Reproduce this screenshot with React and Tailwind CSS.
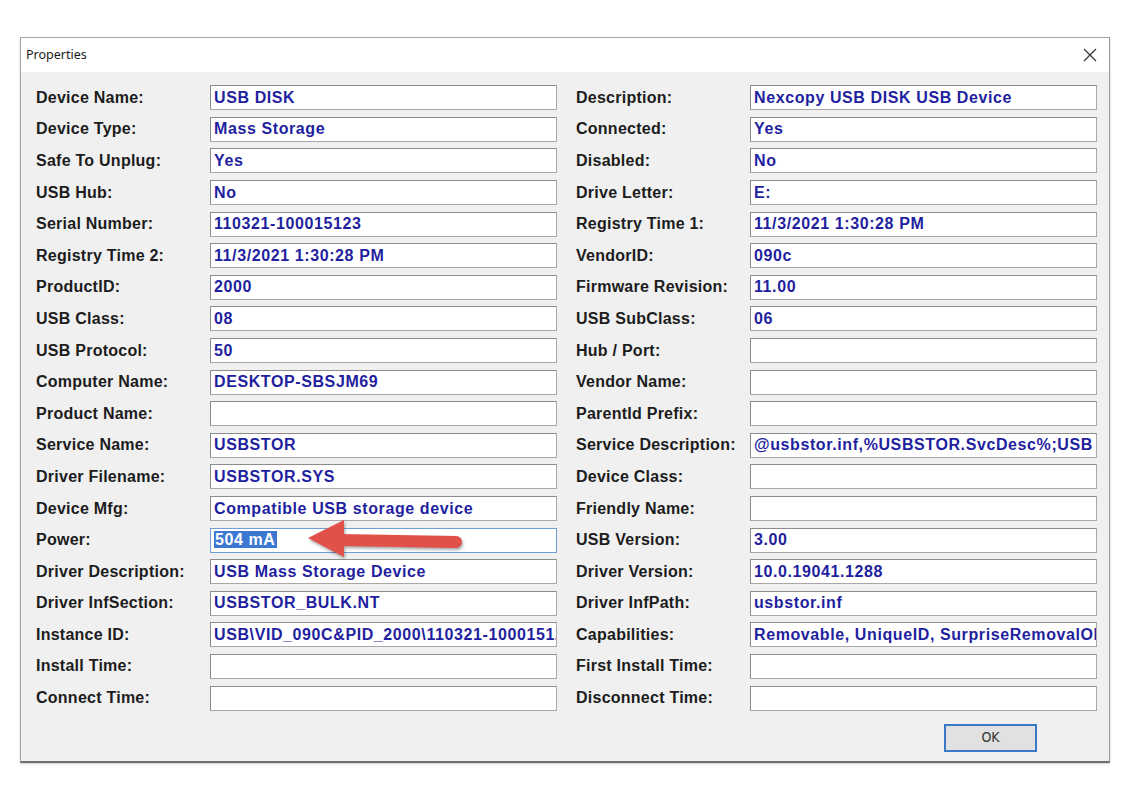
import React from "react";

const left = [
  ["Device Name:", "USB DISK"],
  ["Device Type:", "Mass Storage"],
  ["Safe To Unplug:", "Yes"],
  ["USB Hub:", "No"],
  ["Serial Number:", "110321-100015123"],
  ["Registry Time 2:", "11/3/2021 1:30:28 PM"],
  ["ProductID:", "2000"],
  ["USB Class:", "08"],
  ["USB Protocol:", "50"],
  ["Computer Name:", "DESKTOP-SBSJM69"],
  ["Product Name:", ""],
  ["Service Name:", "USBSTOR"],
  ["Driver Filename:", "USBSTOR.SYS"],
  ["Device Mfg:", "Compatible USB storage device"],
  ["Power:", "504 mA"],
  ["Driver Description:", "USB Mass Storage Device"],
  ["Driver InfSection:", "USBSTOR_BULK.NT"],
  ["Instance ID:", "USB\\VID_090C&PID_2000\\110321-100015123"],
  ["Install Time:", ""],
  ["Connect Time:", ""],
];

const right = [
  ["Description:", "Nexcopy USB DISK USB Device"],
  ["Connected:", "Yes"],
  ["Disabled:", "No"],
  ["Drive Letter:", "E:"],
  ["Registry Time 1:", "11/3/2021 1:30:28 PM"],
  ["VendorID:", "090c"],
  ["Firmware Revision:", "11.00"],
  ["USB SubClass:", "06"],
  ["Hub / Port:", ""],
  ["Vendor Name:", ""],
  ["ParentId Prefix:", ""],
  ["Service Description:", "@usbstor.inf,%USBSTOR.SvcDesc%;USB Mass Storage Driver"],
  ["Device Class:", ""],
  ["Friendly Name:", ""],
  ["USB Version:", "3.00"],
  ["Driver Version:", "10.0.19041.1288"],
  ["Driver InfPath:", "usbstor.inf"],
  ["Capabilities:", "Removable, UniqueID, SurpriseRemovalOK"],
  ["First Install Time:", ""],
  ["Disconnect Time:", ""],
];

const Arrow = () => (
  <svg
    className="absolute left-[92px] top-[-12px] pointer-events-none"
    width="170"
    height="46"
    viewBox="0 0 170 46"
    style={{ filter: "drop-shadow(1px 2px 1.5px rgba(0,0,0,0.35))" }}
  >
    <line x1="36" y1="23" x2="153" y2="25" stroke="#e2504a" strokeWidth="12" strokeLinecap="round" />
    <polygon points="5,21 41,3 41,40" fill="#e2504a" strokeLinejoin="round" />
  </svg>
);

const Field = ({ label, value, focused }) => (
  <div className="flex items-center h-[31.6px]">
    <div className="w-[174px] shrink-0 text-[16px] font-bold tracking-[0.25px] text-[#1c1c1c] whitespace-nowrap">{label}</div>
    <div
      className={`relative w-[347px] h-[25px] shrink-0 bg-white flex items-center pl-[3px] ${
        focused ? "border border-[#6f9fd6]" : "border border-[#8c8c8c] border-b-[#a8a8a8] border-r-[#a8a8a8]"
      }`}
    >
      <div className="overflow-hidden whitespace-nowrap text-[16px] font-bold tracking-[0.6px] text-[#1f1fa0] w-full">
        {focused ? <span className="bg-[#3c78d2] text-white px-[1px]">{value}</span> : value}
      </div>
      {focused && <Arrow />}
    </div>
  </div>
);

export default function App() {
  return (
    <div className="w-[1130px] h-[800px] bg-white pt-[37px] pl-[20px]" style={{ fontFamily: '"Liberation Sans", Arial, sans-serif' }}>
      <div className="w-[1090px] h-[726px] flex flex-col border border-[#a6a6a6] border-b-2 border-b-[#6f6f6f] border-r-[#9a9a9a] bg-[#f0f0f0] shadow-[0_1px_2px_rgba(0,0,0,0.2)]">
        <div className="h-[34px] bg-white flex items-center justify-between pl-[5px] pr-[12px] shrink-0">
          <span className="text-[12.5px] text-[#1a1a1a]" style={{ fontFamily: '"Noto Sans", "Open Sans", sans-serif' }}>
            Properties
          </span>
          <svg width="14" height="14" viewBox="0 0 14 14">
            <path d="M1 1 L13 13 M13 1 L1 13" stroke="#333" strokeWidth="1.2" />
          </svg>
        </div>
        <div className="flex pl-[15px] pt-[10px]">
          <div className="flex flex-col">
            {left.map(([l, v]) => (
              <Field key={l} label={l} value={v} focused={l === "Power:"} />
            ))}
          </div>
          <div className="flex flex-col ml-[19px]">
            {right.map(([l, v]) => (
              <Field key={l} label={l} value={v} />
            ))}
          </div>
        </div>
        <div className="flex justify-end pr-[72px] mt-[10px]">
          <button className="w-[93px] h-[28px] border-2 border-[#3a78c8] bg-[#e1e1e1] text-[14px] text-[#333] flex items-center justify-center" style={{ fontFamily: '"DejaVu Sans Condensed", "Liberation Sans", sans-serif' }}>
            OK
          </button>
        </div>
      </div>
    </div>
  );
}
